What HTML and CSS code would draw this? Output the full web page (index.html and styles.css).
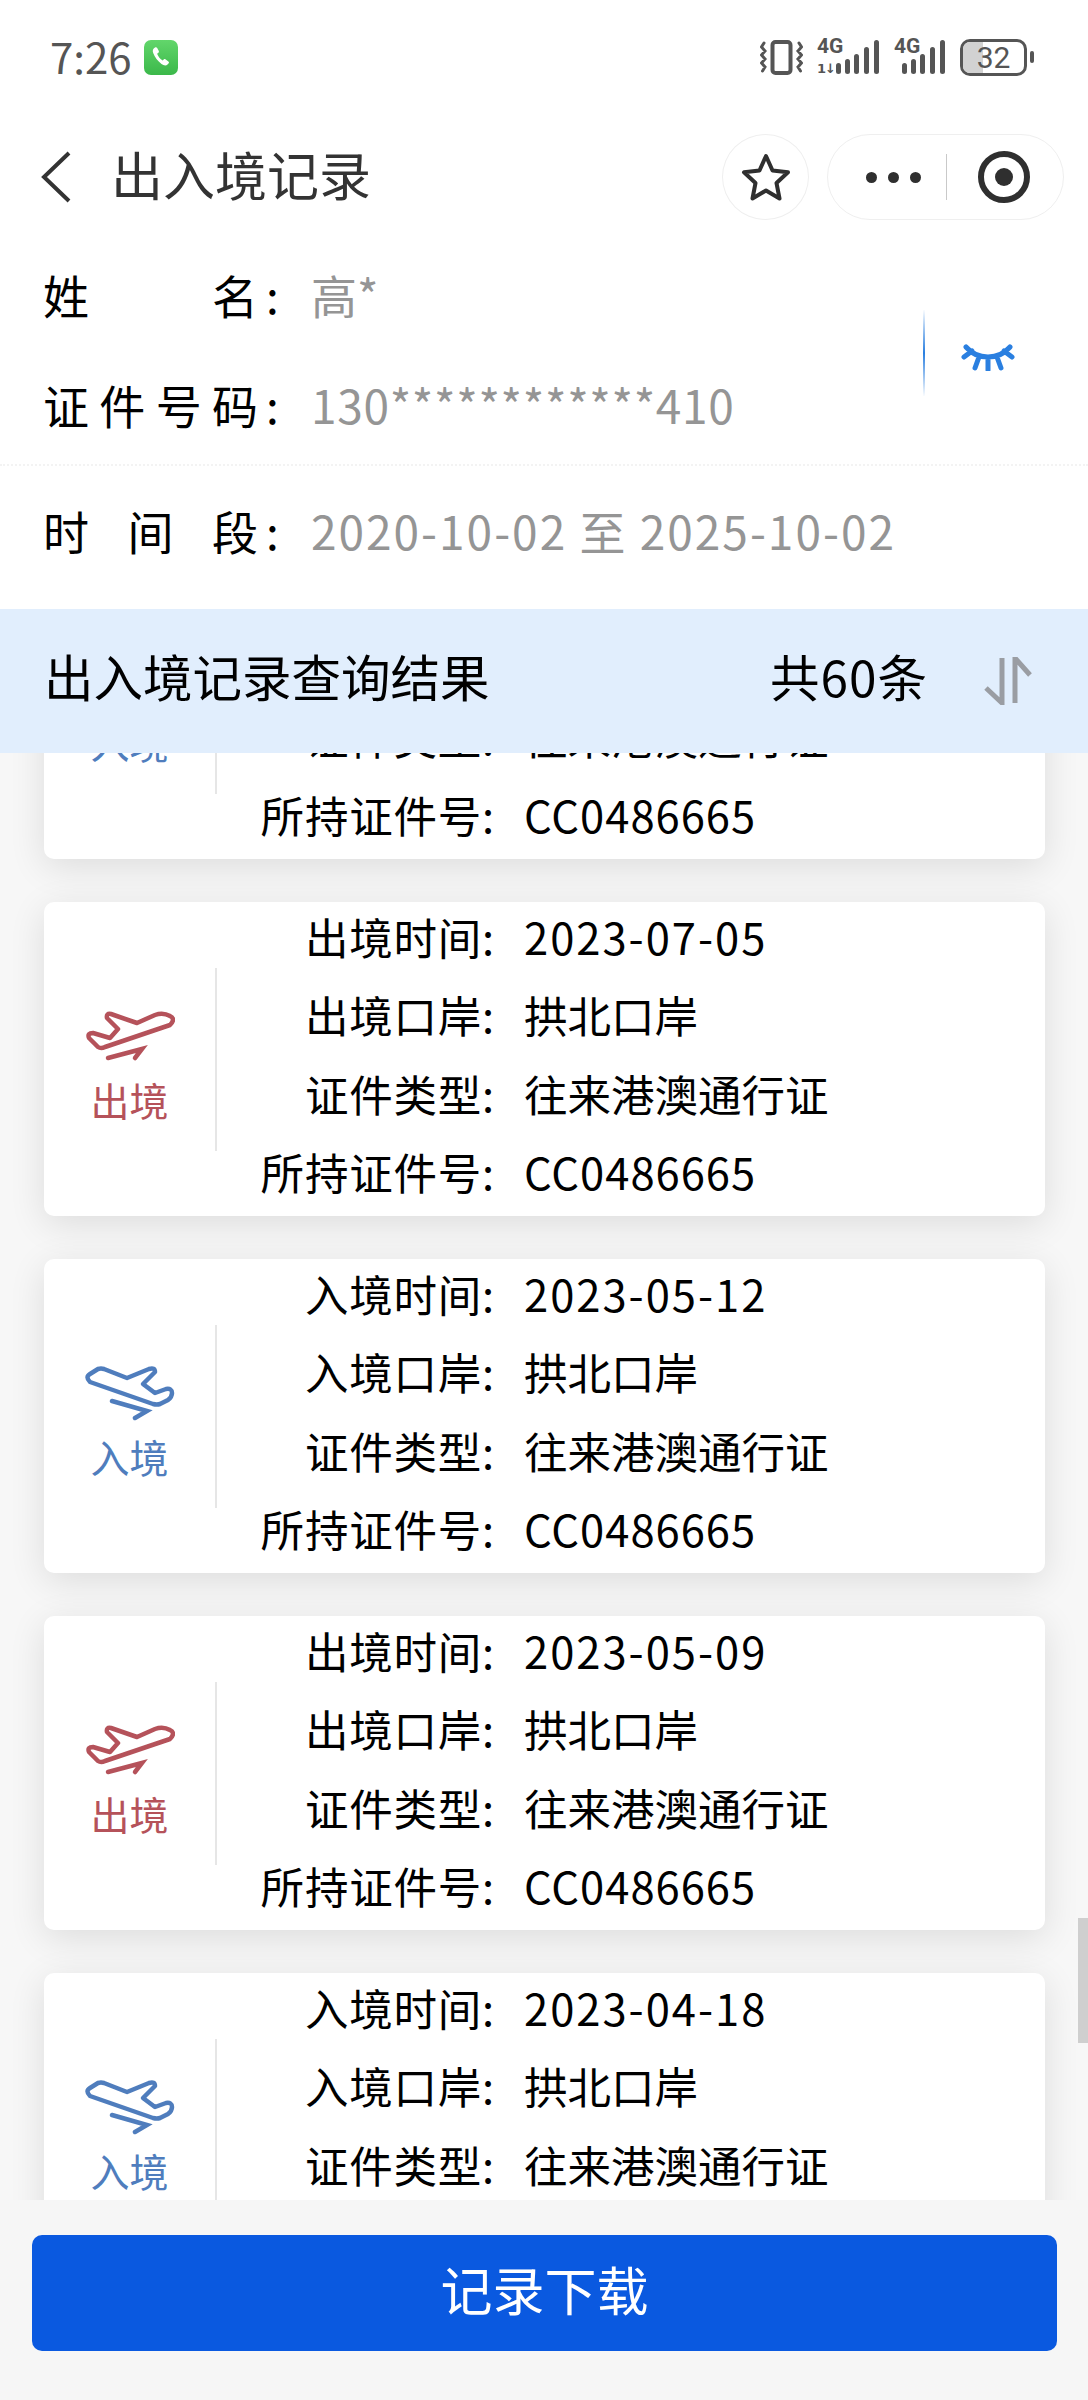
FILE: index.html
```html
<!DOCTYPE html>
<html lang="zh-CN">
<head>
  <meta charset="UTF-8" />
  <title>出入境记录</title>
  <link rel="stylesheet" href="styles.css">
</head>
<body>
  <div class="page">
    <header class="top">
      <div class="status-bar">
        <span class="clock">7:26</span>
        <svg class="phone-badge" viewBox="0 0 34 35">
          <defs>
            <linearGradient id="green" x1="0" y1="0" x2="0" y2="1">
              <stop offset="0" stop-color="#62d66b"/>
              <stop offset="1" stop-color="#3bb84a"/>
            </linearGradient>
          </defs>
          <rect width="34" height="35" rx="7" fill="url(#green)"/>
          <path d="M11 7.500c-2 1-2.800 3-1.800 5.500 1.500 4 4.500 8 8.300 11 2 1.500 4.500 2 6 .6l1.200-1.400c.5-.7.3-1.300-.3-1.800l-3-2.200c-.7-.4-1.200-.3-1.700.2l-1 1.100c-2.500-1.500-4.500-4-5.600-6.800l1.300-.9c.6-.5.700-1.100.4-1.800l-1.600-3c-.4-.7-1.300-.9-2.200-.5z" fill="#fff"/>
        </svg>
        <div class="status-icons">
          <svg class="ic-vibrate" viewBox="0 0 43 35">
            <rect x="12.500" y="2" width="18" height="31" rx="3" fill="none" stroke="#555" stroke-width="4"/>
            <path d="M4 3L1.500 7 5 11l-3.500 4L5 19l-3.500 4L5 27l-2.500 4 M39 3l2.500 4-3.500 4 3.500 4-3.500 4 3.500 4-3.500 4 2.500 4" fill="none" stroke="#555" stroke-width="3" stroke-linecap="round"/>
          </svg>
          <div class="net net-a">
            <span class="net-label">4G</span>
            <span class="net-arrows">1↓</span>
            <svg class="net-bars" viewBox="0 0 44 36">
              <rect x="0" y="24" width="5" height="11" rx="2.500"/>
              <rect x="9" y="20" width="5" height="15" rx="2.500"/>
              <rect x="18" y="15" width="5" height="20" rx="2.500"/>
              <rect x="28" y="8" width="5" height="27" rx="2.500"/>
              <rect x="38" y="1" width="5" height="34" rx="2.500"/>
            </svg>
          </div>
          <div class="net net-b">
            <span class="net-label">4G</span>
            <svg class="net-bars" viewBox="0 0 44 36">
              <rect x="0" y="24" width="5" height="11" rx="2.500"/>
              <rect x="9" y="20" width="5" height="15" rx="2.500"/>
              <rect x="18" y="15" width="5" height="20" rx="2.500"/>
              <rect x="28" y="8" width="5" height="27" rx="2.500"/>
              <rect x="38" y="1" width="5" height="34" rx="2.500"/>
            </svg>
          </div>
          <div class="battery"><span class="battery-level"></span><span class="battery-num">32</span></div>
          <span class="battery-cap"></span>
        </div>
      </div>

      <nav class="nav-bar">
        <svg class="back" viewBox="0 0 32 52"><path d="M29 2L4 26l25 24" fill="none" stroke="#333" stroke-width="4"/></svg>
        <h1 class="nav-title">出入境记录</h1>
        <div class="star-btn">
          <svg viewBox="0 0 50 50" width="50" height="50"><path d="M25 4l6.500 14.500 15.500 1.800-11.500 10.700 3 15.500L25 38.500 11.500 46.500l3-15.500L3 20.300l15.500-1.800z" fill="none" stroke="#2f2f2f" stroke-width="4" stroke-linejoin="round"/></svg>
        </div>
        <div class="capsule">
          <span class="dots"><i></i><i></i><i></i></span>
          <span class="capsule-line"></span>
          <span class="target"><i></i></span>
        </div>
      </nav>

      <section class="person">
        <div class="person-rows">
          <div class="field"><span class="field-label">姓名</span><span class="colon">:</span><span class="field-value">高*</span></div>
          <div class="field"><span class="field-label">证件号码</span><span class="colon">:</span><span class="field-value id-no">130************410</span></div>
        </div>
        <div class="eye-box">
          <svg class="eye" viewBox="0 0 54 28" width="54" height="28">
            <path d="M5 4c6 7 13 10 22 10s16-3 22-10 M3 14l8-6 M14 25l4-11 M27 27V14 M40 25l-4-11 M51 14l-8-6" fill="none" stroke="#2a7fe0" stroke-width="5" stroke-linecap="round"/>
          </svg>
        </div>
      </section>
      <section class="period">
        <div class="field"><span class="field-label">时间段</span><span class="colon">:</span><span class="field-value date-range">2020-10-02 至 2025-10-02</span></div>
      </section>
    </header>

    <div class="result-bar">
      <span class="result-title">出入境记录查询结果</span>
      <span class="result-count">共60条</span>
      <svg class="sort" viewBox="0 0 48 48"><path d="M18 1v45L2 31 M31 46V1l15 17" fill="none" stroke="#9a9da3" stroke-width="5"/></svg>
    </div>

    <main class="list-wrap">
      <div class="list">

        <div class="card">
          <div class="card-side in">
            <svg class="plane" viewBox="0 0 90 58"><path d="M5 19Q0 14 5 11l8-5q3-1 6 0l23 9 22-9q6-2 6 3L58 21l12 9 11-4q6-1 6 4 0 4-4 7l-8 4q-3 1-7 0z" fill="none" stroke="currentColor" stroke-width="4.500" stroke-linejoin="round"/><path d="M27 38l35 10-12 7" fill="none" stroke="currentColor" stroke-width="4.500" stroke-linecap="round"/></svg>
            <span class="side-text">入境</span>
          </div>
          <div class="card-rows">
            <div class="row"><span class="row-label">证件类型:</span><span class="row-value">往来港澳通行证</span></div>
            <div class="row"><span class="row-label">所持证件号:</span><span class="row-value num">CC0486665</span></div>
          </div>
        </div>

        <div class="card">
          <div class="card-side out">
            <svg class="plane" viewBox="0 0 90 58"><path d="M85 19q6-6 0-9-7-4-15-1L52 17 26 8q-5-1-4 4l11 11-8 9-17-5q-6 0-4 5l9 9q3 2 7 0z" fill="none" stroke="currentColor" stroke-width="4.500" stroke-linejoin="round"/><path d="M23 52l34-9-7 9" fill="none" stroke="currentColor" stroke-width="4.500" stroke-linecap="round"/></svg>
            <span class="side-text">出境</span>
          </div>
          <div class="card-rows">
            <div class="row"><span class="row-label">出境时间:</span><span class="row-value date">2023-07-05</span></div>
            <div class="row"><span class="row-label">出境口岸:</span><span class="row-value">拱北口岸</span></div>
            <div class="row"><span class="row-label">证件类型:</span><span class="row-value">往来港澳通行证</span></div>
            <div class="row"><span class="row-label">所持证件号:</span><span class="row-value num">CC0486665</span></div>
          </div>
        </div>

        <div class="card">
          <div class="card-side in">
            <svg class="plane" viewBox="0 0 90 58"><path d="M5 19Q0 14 5 11l8-5q3-1 6 0l23 9 22-9q6-2 6 3L58 21l12 9 11-4q6-1 6 4 0 4-4 7l-8 4q-3 1-7 0z" fill="none" stroke="currentColor" stroke-width="4.500" stroke-linejoin="round"/><path d="M27 38l35 10-12 7" fill="none" stroke="currentColor" stroke-width="4.500" stroke-linecap="round"/></svg>
            <span class="side-text">入境</span>
          </div>
          <div class="card-rows">
            <div class="row"><span class="row-label">入境时间:</span><span class="row-value date">2023-05-12</span></div>
            <div class="row"><span class="row-label">入境口岸:</span><span class="row-value">拱北口岸</span></div>
            <div class="row"><span class="row-label">证件类型:</span><span class="row-value">往来港澳通行证</span></div>
            <div class="row"><span class="row-label">所持证件号:</span><span class="row-value num">CC0486665</span></div>
          </div>
        </div>

        <div class="card">
          <div class="card-side out">
            <svg class="plane" viewBox="0 0 90 58"><path d="M85 19q6-6 0-9-7-4-15-1L52 17 26 8q-5-1-4 4l11 11-8 9-17-5q-6 0-4 5l9 9q3 2 7 0z" fill="none" stroke="currentColor" stroke-width="4.500" stroke-linejoin="round"/><path d="M23 52l34-9-7 9" fill="none" stroke="currentColor" stroke-width="4.500" stroke-linecap="round"/></svg>
            <span class="side-text">出境</span>
          </div>
          <div class="card-rows">
            <div class="row"><span class="row-label">出境时间:</span><span class="row-value date">2023-05-09</span></div>
            <div class="row"><span class="row-label">出境口岸:</span><span class="row-value">拱北口岸</span></div>
            <div class="row"><span class="row-label">证件类型:</span><span class="row-value">往来港澳通行证</span></div>
            <div class="row"><span class="row-label">所持证件号:</span><span class="row-value num">CC0486665</span></div>
          </div>
        </div>

        <div class="card card-cut">
          <div class="card-side in">
            <svg class="plane" viewBox="0 0 90 58"><path d="M5 19Q0 14 5 11l8-5q3-1 6 0l23 9 22-9q6-2 6 3L58 21l12 9 11-4q6-1 6 4 0 4-4 7l-8 4q-3 1-7 0z" fill="none" stroke="currentColor" stroke-width="4.500" stroke-linejoin="round"/><path d="M27 38l35 10-12 7" fill="none" stroke="currentColor" stroke-width="4.500" stroke-linecap="round"/></svg>
            <span class="side-text">入境</span>
          </div>
          <div class="card-rows">
            <div class="row"><span class="row-label">入境时间:</span><span class="row-value date">2023-04-18</span></div>
            <div class="row"><span class="row-label">入境口岸:</span><span class="row-value">拱北口岸</span></div>
            <div class="row"><span class="row-label">证件类型:</span><span class="row-value">往来港澳通行证</span></div>
          </div>
        </div>

      </div>
      <div class="scroll-thumb"></div>
    </main>

    <footer class="bottom">
      <button class="download-btn">记录下载</button>
    </footer>
  </div>
</body>
</html>
```

FILE: styles.css
```css
* {
  box-sizing: border-box;
}

body {
  margin: 0;
  background: #fff;
  font-family: "Noto Sans CJK SC", "Noto Sans", sans-serif;
  color: #000;
}

.page {
  display: flex;
  flex-direction: column;
  height: 2400px;
  overflow: hidden;
}

/* status bar */
.status-bar {
  display: flex;
  align-items: center;
  height: 114px;
  padding: 0 54px 0 50px;
  color: #555;
}

.clock {
  font-size: 42px;
  width: 94px;
  line-height: 1;
  margin-top: -2px;
}

.phone-badge {
  width: 34px;
  height: 35px;
}

.status-icons {
  display: flex;
  align-items: center;
  margin-left: auto;
}

.ic-vibrate {
  width: 43px;
  height: 35px;
  margin-right: 14px;
}

.net {
  position: relative;
  height: 36px;
}

.net-a {
  width: 63px;
  margin-right: 14px;
}

.net-b {
  width: 52px;
  margin-right: 14px;
}

.net-label {
  position: absolute;
  left: 0;
  top: -3px;
  font-size: 21px;
  line-height: 20px;
  font-weight: 700;
  font-family: "Roboto", sans-serif;
  color: #555;
}

.net-arrows {
  position: absolute;
  left: 0;
  bottom: -2px;
  font-size: 13px;
  line-height: 16px;
  font-weight: 700;
  letter-spacing: -1px;
  font-family: "DejaVu Sans", sans-serif;
}

.net-bars {
  position: absolute;
  bottom: 0;
  right: 0;
  height: 36px;
  width: 44px;
  fill: #555;
}

.battery {
  position: relative;
  width: 67px;
  height: 37px;
  border: 3px solid #555;
  border-radius: 10px;
  overflow: hidden;
}

.battery-level {
  position: absolute;
  left: 0;
  top: 0;
  bottom: 0;
  width: 32%;
  background: #d2d2d2;
}

.battery-num {
  position: relative;
  display: block;
  text-align: center;
  font-size: 30px;
  line-height: 31px;
  font-family: "Roboto", sans-serif;
  color: #555;
}

.battery-cap {
  width: 4px;
  height: 12px;
  margin-left: 3px;
  border-radius: 2px;
  background: #555;
}

/* nav bar */
.nav-bar {
  display: flex;
  align-items: center;
  height: 106px;
  padding: 20px 24px 0 40px;
}

.back {
  width: 32px;
  height: 52px;
}

.nav-title {
  margin: -8px 0 0 39px;
  font-size: 52px;
  font-weight: 400;
  color: #333;
}

.star-btn {
  display: flex;
  align-items: center;
  justify-content: center;
  width: 87px;
  height: 86px;
  margin-left: auto;
  border: 1px solid #efefef;
  border-radius: 50%;
}

.capsule {
  display: flex;
  align-items: center;
  width: 237px;
  height: 86px;
  margin-left: 18px;
  border: 1px solid #efefef;
  border-radius: 43px;
  padding-left: 38px;
}

.dots {
  display: flex;
  gap: 11px;
}

.dots i {
  width: 11px;
  height: 11px;
  border-radius: 50%;
  background: #2f2f2f;
}

.capsule-line {
  width: 1px;
  height: 46px;
  margin-left: 25px;
  background: #c9c9c9;
}

.target {
  display: flex;
  align-items: center;
  justify-content: center;
  width: 52px;
  height: 52px;
  margin-left: 31px;
  border: 6px solid #2f2f2f;
  border-radius: 50%;
}

.target i {
  width: 18px;
  height: 18px;
  border-radius: 50%;
  background: #2f2f2f;
}

/* person info */
.person {
  display: flex;
  align-items: center;
  padding: 22px 73px 0 43px;
  border-bottom: 2px dotted #f3f3f3;
  height: 246px;
}

.person-rows .field {
  height: 110px;
}

.field {
  display: flex;
  align-items: center;
  font-size: 46px;
  padding-bottom: 8px;
}

.field-label {
  width: 215px;
  text-align: justify;
  text-align-last: justify;
  white-space: nowrap;
}

.colon {
  width: 53px;
  padding-left: 8px;
}

.field-value {
  color: #959595;
  white-space: nowrap;
}

.id-no {
  letter-spacing: 0.7px;
}

.date-range {
  letter-spacing: 2px;
}

.eye-box {
  display: flex;
  align-items: center;
  height: 86px;
  margin-left: auto;
  padding-left: 36px;
  border-left: 2px solid;
  border-image: linear-gradient(to bottom, transparent, #2a7fe0 50%, transparent) 1;
}

.eye {
  margin-top: 8px;
}

.period {
  padding: 33px 43px 40px;
  height: 143px;
}

.period .field {
  height: 70px;
}

/* result bar */
.result-bar {
  display: flex;
  align-items: center;
  height: 144px;
  padding: 0 56px 12px 44px;
  background: #e1eefd;
  font-size: 49.500px;
  position: relative;
  z-index: 1;
}

.result-count {
  margin-left: auto;
  letter-spacing: 1px;
}

.sort {
  width: 48px;
  height: 48px;
  margin: 12px 0 0 56px;
}

/* list */
.list-wrap {
  position: relative;
  flex: 1;
  overflow: hidden;
  background: #f7f7f7;
}

.list {
  display: flex;
  flex-direction: column;
  gap: 43px;
  margin-top: -208px;
  padding: 0 43px 0 44px;
}

.card {
  display: flex;
  flex: none;
  height: 314px;
  background: #fff;
  border-radius: 10px;
  box-shadow: 0 8px 36px rgba(0, 0, 0, 0.11);
}

.card-side {
  position: relative;
  display: flex;
  flex-direction: column;
  align-items: center;
  flex: none;
  width: 173px;
  padding: 104px 2px 0 0;
}

.card-side::after {
  content: "";
  position: absolute;
  right: 0;
  top: 66px;
  width: 2px;
  height: 183px;
  background: #e6e6e6;
}

.card-side.in {
  color: #4f7dbd;
}

.card-side.out {
  color: #b5525a;
}

.plane {
  width: 90px;
  height: 58px;
}

.side-text {
  font-size: 39px;
  line-height: 56px;
  margin-top: 7px;
}

.card-rows {
  display: flex;
  flex-direction: column;
  justify-content: flex-end;
  flex: 1;
}

.card-cut .card-rows {
  justify-content: flex-start;
}

.row {
  display: flex;
  align-items: center;
  flex: none;
  height: 78.500px;
  padding-bottom: 10px;
  font-size: 43.500px;
}

.row-label {
  width: 278px;
  text-align: right;
  white-space: nowrap;
  letter-spacing: 0.8px;
}

.row-value {
  margin-left: 29px;
  white-space: nowrap;
}

.row-value.date {
  letter-spacing: 2px;
}

.row-value.num {
  letter-spacing: 1px;
}

.scroll-thumb {
  position: absolute;
  right: 0;
  top: 1165px;
  width: 10px;
  height: 125px;
  background: #cfcfcf;
}

/* bottom button */
.bottom {
  flex: none;
  height: 200px;
  padding: 35px 31px 0 32px;
  background: #f6f6f6;
  position: relative;
}

.download-btn {
  display: block;
  width: 100%;
  height: 116px;
  padding: 0 0 10px;
  border: none;
  border-radius: 10px;
  background: #0a59e0;
  color: #fff;
  font-family: inherit;
  font-size: 52px;
}
```
